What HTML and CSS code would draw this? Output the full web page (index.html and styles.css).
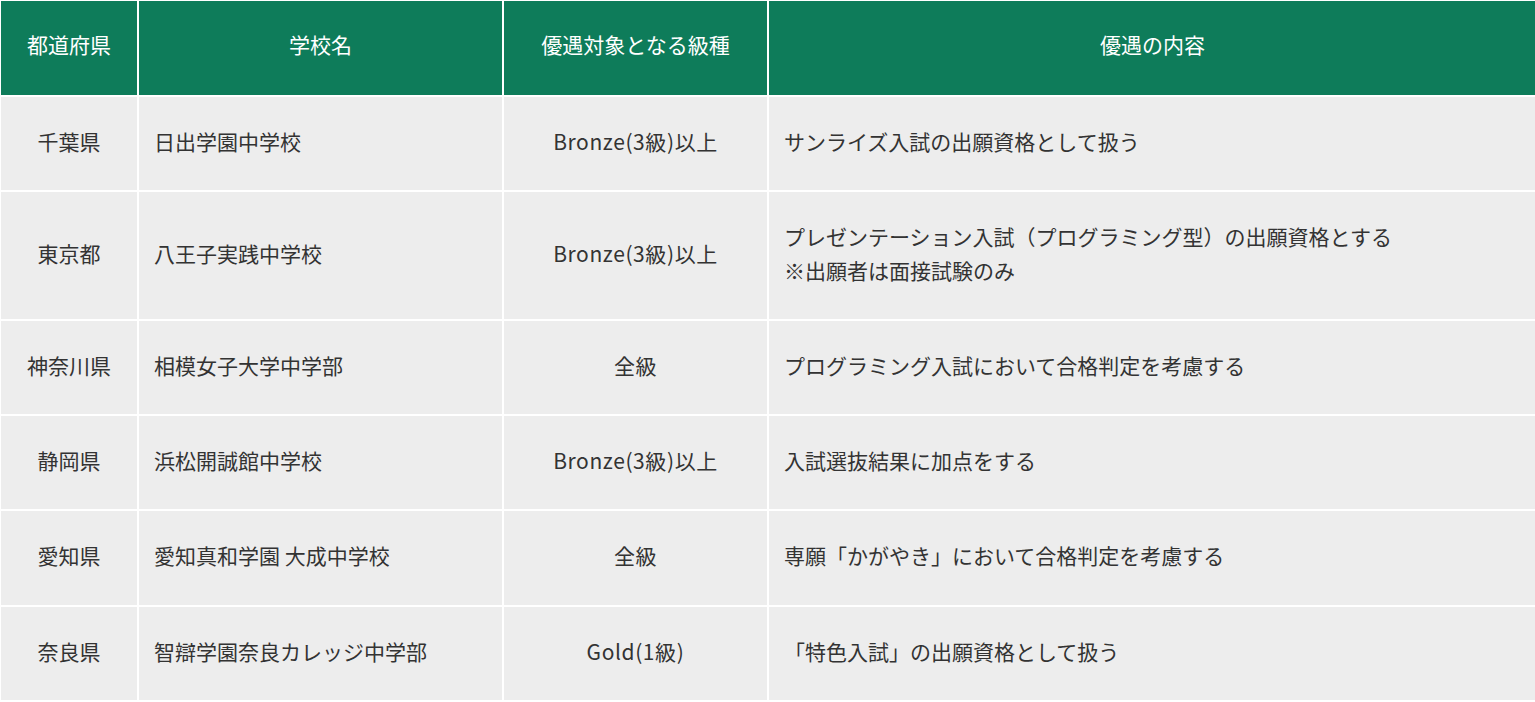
FILE: index.html
```html
<!DOCTYPE html>
<html lang="ja">
<head>
<meta charset="utf-8">
<title>優遇校一覧</title>
<link rel="stylesheet" href="styles.css">
</head>
<body>
<table class="table">
  <colgroup>
    <col class="c-pref">
    <col class="c-school">
    <col class="c-grade">
    <col class="c-detail">
  </colgroup>
  <thead>
    <tr>
      <th>都道府県</th>
      <th>学校名</th>
      <th>優遇対象となる級種</th>
      <th>優遇の内容</th>
    </tr>
  </thead>
  <tbody>
    <tr>
      <td class="center">千葉県</td>
      <td>日出学園中学校</td>
      <td class="center grade">Bronze(3級)以上</td>
      <td>サンライズ入試の出願資格として扱う</td>
    </tr>
    <tr>
      <td class="center">東京都</td>
      <td>八王子実践中学校</td>
      <td class="center grade">Bronze(3級)以上</td>
      <td>プレゼンテーション入試（プログラミング型）の出願資格とする<br>※出願者は面接試験のみ</td>
    </tr>
    <tr>
      <td class="center">神奈川県</td>
      <td>相模女子大学中学部</td>
      <td class="center grade">全級</td>
      <td>プログラミング入試において合格判定を考慮する</td>
    </tr>
    <tr>
      <td class="center">静岡県</td>
      <td>浜松開誠館中学校</td>
      <td class="center grade">Bronze(3級)以上</td>
      <td>入試選抜結果に加点をする</td>
    </tr>
    <tr>
      <td class="center">愛知県</td>
      <td>愛知真和学園 大成中学校</td>
      <td class="center grade">全級</td>
      <td>専願「かがやき」において合格判定を考慮する</td>
    </tr>
    <tr>
      <td class="center">奈良県</td>
      <td>智辯学園奈良カレッジ中学部</td>
      <td class="center grade">Gold(1級)</td>
      <td>「特色入試」の出願資格として扱う</td>
    </tr>
  </tbody>
</table>
</body>
</html>
```

FILE: styles.css
```css
html, body {
  margin: 0;
  padding: 0;
  background: #ffffff;
  overflow: hidden;
}

body {
  font-family: "Noto Sans CJK JP", "Noto Sans", sans-serif;
  font-size: 21px;
  color: #333333;
}

.table {
  table-layout: fixed;
  border-collapse: separate;
  border-spacing: 2px;
  width: 1539px;
  margin: -1px 0 0 -1px;
}

.c-pref { width: 136px; }
.c-school { width: 363px; }
.c-grade { width: 263px; }
.c-detail { width: 767px; }

.table th {
  background: #0e7c5a;
  color: #ffffff;
  font-weight: normal;
  text-align: center;
  line-height: 34px;
  padding: 26px 8px 34px;
  white-space: nowrap;
}

.table td {
  background: #ededed;
  line-height: 33.3px;
  padding: 28px 15px 32px;
  text-align: left;
  vertical-align: middle;
  white-space: nowrap;
}

.table td.center {
  text-align: center;
  padding-left: 8px;
  padding-right: 8px;
}

.table td.grade {
  letter-spacing: 0.6px;
}
```
